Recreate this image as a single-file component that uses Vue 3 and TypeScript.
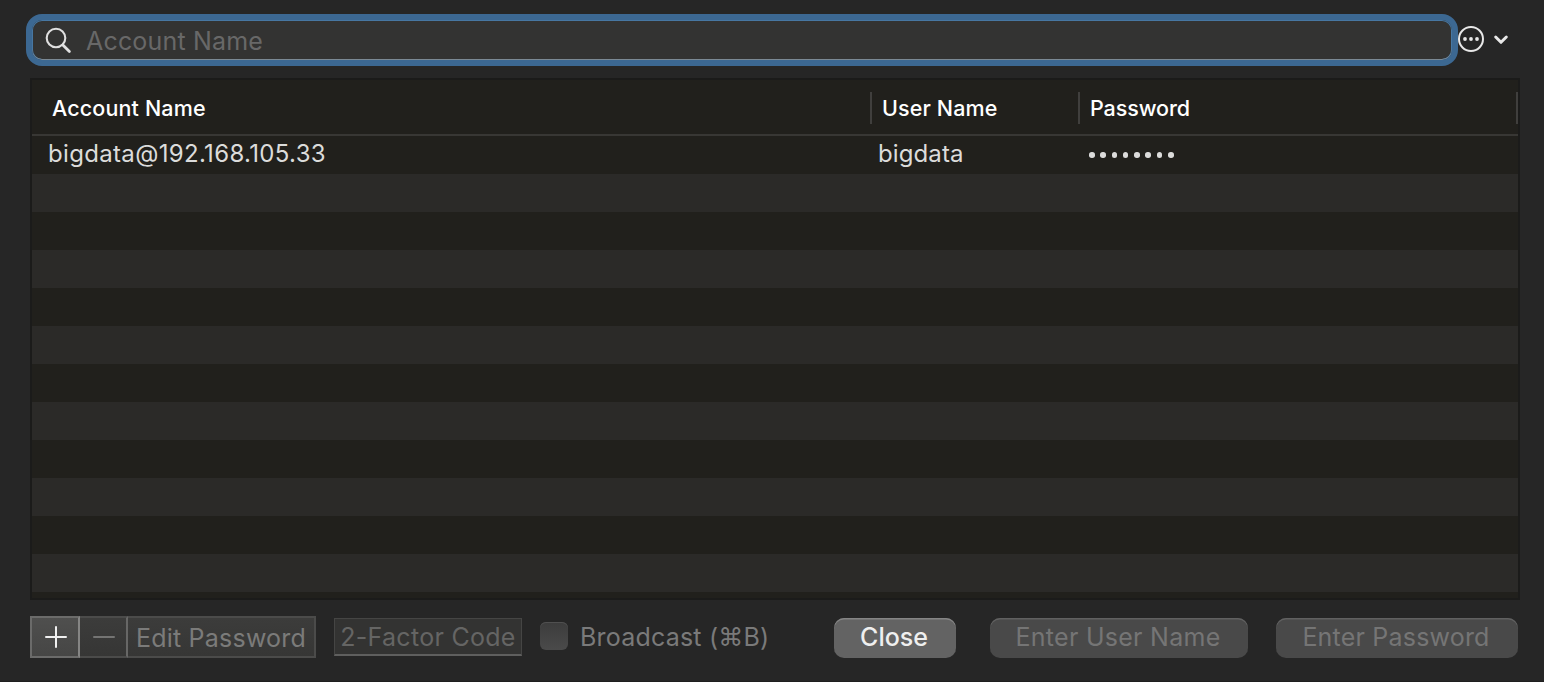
<script setup lang="ts">
import { ref } from 'vue'

interface Account {
  name: string
  user: string
  passwordLength: number
}

const query = ref('')
const accounts: Account[] = [
  { name: 'bigdata@192.168.105.33', user: 'bigdata', passwordLength: 8 },
]
const emptyRows = 12
</script>

<template>
  <main class="panel">
    <div class="top">
      <label class="search">
        <svg class="lens" width="28" height="28" viewBox="0 0 28 28">
          <circle cx="12" cy="12" r="9.3" />
          <path d="M18.9 18.9L25.4 25.4" />
        </svg>
        <input v-model="query" type="text" placeholder="Account Name" />
      </label>
      <svg class="more" width="52" height="28" viewBox="0 0 52 28">
        <circle class="line" cx="13" cy="14" r="12" />
        <circle cx="7" cy="14" r="1.9" />
        <circle cx="13" cy="14" r="1.9" />
        <circle cx="19" cy="14" r="1.9" />
        <path class="chevron" d="M37.7 12L43 17.3L48.3 12" />
      </svg>
    </div>

    <section class="table">
      <div class="head">
        <div class="cell"><span class="t-name">Account Name</span></div>
        <div class="cell"><span class="t-name">User Name</span></div>
        <div class="cell"><span class="t-password">Password</span></div>
      </div>
      <div v-for="a in accounts" :key="a.name" class="row">
        <div class="value"><span class="v-name">{{ a.name }}</span></div>
        <div class="value"><span class="v-user">{{ a.user }}</span></div>
        <div class="value dots"><i v-for="n in a.passwordLength" :key="n"></i></div>
      </div>
      <div v-for="n in emptyRows" :key="n" class="row"></div>
    </section>

    <footer class="bar">
      <div class="segments">
        <button class="seg add" aria-label="Add">
          <svg width="22" height="22" viewBox="0 0 22 22"><path d="M11 1V21M1 11H21" /></svg>
        </button>
        <button class="seg remove" aria-label="Remove">
          <svg width="22" height="22" viewBox="0 0 22 22"><path d="M1 11H21" /></svg>
        </button>
        <button class="seg edit"><span>Edit Password</span></button>
      </div>
      <button class="factor"><span>2-Factor Code</span></button>
      <label class="broadcast"><i class="check"></i><span>Broadcast (<b>⌘</b>B)</span></label>
      <button class="push close"><span>Close</span></button>
      <button class="push user"><span>Enter User Name</span></button>
      <button class="push pass"><span>Enter Password</span></button>
    </footer>
  </main>
</template>

<style>
body {
  margin: 0;
  background: #262626;
}
</style>

<style scoped>
* {
  box-sizing: border-box;
}
.panel {
  width: 1544px;
  height: 682px;
  padding: 14px 24px 0 26px;
  overflow: hidden;
  background: #262626;
  border-bottom: 1px solid #1f1f1f;
  font-family: Inter, "DejaVu Sans", sans-serif;
  font-size: 25px;
}
span {
  white-space: nowrap;
}
button,
input {
  margin: 0;
  padding: 0;
  border: 0;
  outline: 0;
  background: none;
  font: inherit;
  color: inherit;
}
.top {
  display: flex;
  height: 52px;
}
.search {
  display: flex;
  align-items: center;
  width: 1432px;
  height: 52px;
  padding-left: 12px;
  border: 6px solid #3c6892;
  border-radius: 16px;
  background: #333332;
  box-shadow: inset 0 -1px #7b8994, inset 0 0 0 1px #4777a2;
}
.lens {
  flex: none;
  fill: none;
  stroke: #e0e0e0;
  stroke-width: 2.1;
}
.lens path {
  stroke-width: 2.8;
  stroke-linecap: round;
}
.search input {
  flex: 1;
  margin-left: 14px;
  height: 38px;
  padding-top: 2px;
  letter-spacing: 0.18px;
}
.search input::placeholder {
  color: #686868;
  opacity: 1;
}
.more {
  margin-top: 11px;
  fill: #e8e8e8;
}
.more .line,
.more .chevron {
  fill: none;
  stroke: #e8e8e8;
  stroke-width: 2;
}
.more .chevron {
  stroke-width: 3;
  stroke-linecap: round;
  stroke-linejoin: round;
}
.table {
  width: 1490px;
  height: 522px;
  margin: 12px 0 0 4px;
  overflow: hidden;
  border: 2px solid #1b1b1a;
  background: #21201c;
}
.head,
.row {
  display: grid;
  grid-template-columns: 840px 208px 438px;
}
.head {
  height: 56px;
  padding-top: 12px;
  border-bottom: 2px solid #383734;
  color: #fff;
  font-size: 21.5px;
  font-weight: 500;
}
.t-name {
  letter-spacing: 0.14px;
}
.t-password {
  letter-spacing: -0.1px;
}
.cell {
  height: 32px;
  border-right: 2px solid #403f3d;
  padding-left: 10px;
  line-height: 33px;
}
.cell:first-child {
  padding-left: 20px;
}
.row {
  height: 38px;
  color: #dcdcdb;
  font-size: 24px;
}
.row:nth-child(odd) {
  background: #2b2a28;
}
.value {
  padding-left: 6px;
  line-height: 36px;
}
.value:first-child {
  padding-left: 16px;
}
.v-name {
  letter-spacing: 0.33px;
}
.v-user {
  letter-spacing: 0.1px;
}
.dots {
  display: flex;
  gap: 5.8px;
  padding: 16px 0 0 9px;
}
.dots i {
  width: 5.5px;
  height: 5.5px;
  border-radius: 50%;
  background: #dcdcdb;
}
.bar {
  display: flex;
  align-items: flex-start;
  margin: 16px 0 0 4px;
}
.segments {
  display: flex;
  width: 286px;
  height: 42px;
}
.seg {
  display: flex;
  align-items: center;
  justify-content: center;
  height: 42px;
  border: 2px solid #4b4b4a;
  border-left: 0;
  background: linear-gradient(#3c3c3b, #363635);
  color: #7b7b7a;
}
.seg svg {
  fill: none;
  stroke: #747473;
  stroke-width: 2;
  stroke-linecap: round;
}
.add {
  width: 50px;
  border: 2px solid #6b6b6a;
  border-right-color: #858584;
  background: linear-gradient(#4f4f4e, #464645);
}
.add svg {
  margin-left: 1px;
  stroke: #f0f0f0;
}
.remove {
  width: 48px;
  border-right-color: #676766;
}
.remove svg {
  margin-left: 1px;
}
.edit {
  width: 188px;
  padding-top: 1px;
  letter-spacing: 0.22px;
}
.factor {
  width: 188px;
  height: 38px;
  margin: 2px 0 0 18px;
  border: 1px solid #454544;
  border-bottom: 2px solid #5f5f5e;
  background: #333332;
  color: #656564;
  letter-spacing: 0.28px;
}
.broadcast {
  display: flex;
  width: 230px;
  margin: 2px 0 0 18px;
  color: #7a7a7a;
  line-height: 38px;
  letter-spacing: 0.2px;
}
.broadcast b {
  font-family: "DejaVu Sans", sans-serif;
  font-weight: 400;
  font-size: 25px;
  line-height: 1;
}
.check {
  flex: none;
  width: 28px;
  height: 28px;
  margin: 4px 12px 0 0;
  border-radius: 6px;
  background: linear-gradient(#3c3c3c, #4a4a4a);
  box-shadow: inset 0 1px #505050;
}
.push {
  height: 40px;
  margin-top: 2px;
  padding-bottom: 2px;
  border-radius: 10px;
  background: #494949;
  box-shadow: inset 0 1.5px #616161;
  color: #757575;
  line-height: 38px;
}
.close {
  width: 122px;
  margin-left: 64px;
  padding-right: 2px;
  background: #636363;
  box-shadow: inset 0 1.5px #858585;
  color: #efefef;
  font-weight: 500;
}
.user {
  width: 258px;
  margin-left: 34px;
  padding-right: 2px;
  letter-spacing: 0.27px;
}
.pass {
  width: 242px;
  margin-left: 28px;
  padding-right: 2px;
  letter-spacing: 0.2px;
}
</style>
